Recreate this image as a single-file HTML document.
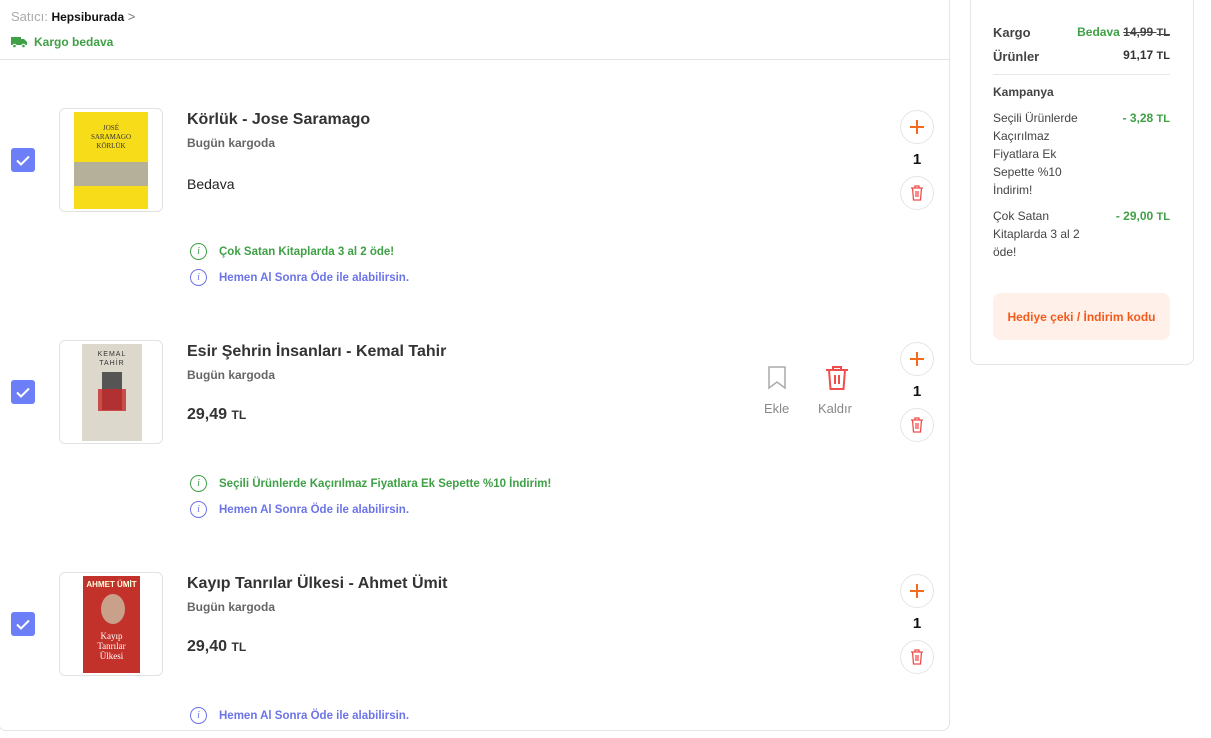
<!DOCTYPE html>
<html><head><meta charset="utf-8">
<style>
*{box-sizing:border-box;margin:0;padding:0}
body{width:1211px;height:738px;background:#fff;font-family:"Liberation Sans",Arial,sans-serif;position:relative;overflow:hidden;color:#333}
.a{position:absolute}
.main{left:-2px;top:-10px;width:952px;height:741px;border:1px solid #e5e5e5;border-radius:8px}
.side{left:970px;top:-10px;width:224px;height:375px;border:1px solid #e5e5e5;border-radius:8px}
.img{width:104px;height:104px;border:1px solid #e2e2e2;border-radius:6px;overflow:hidden}
.title{font-size:16px;font-weight:bold;color:#333}
.sub{font-size:12px;font-weight:bold;color:#666}
.price{font-size:16px;font-weight:bold;color:#333}
.circ{width:34px;height:34px;border:1px solid #e5e5e5;border-radius:50%;display:flex;align-items:center;justify-content:center}
.qty{font-size:15px;font-weight:bold;color:#111;width:34px;text-align:center}
.info{font-size:11.5px;font-weight:bold;display:flex;align-items:center;gap:12px}
.ic{width:17px;height:17px;border:1.3px solid;border-radius:50%;font-size:10px;font-weight:normal;display:flex;align-items:center;justify-content:center;font-style:italic;font-family:"Liberation Serif",serif}
.g{color:#3fa046}.b{color:#6b74e8}
.s{font-size:12px;color:#444}
</style></head><body>
<div class="a main"></div>
<div class="a" style="left:0;top:59px;width:949px;height:1px;background:#e5e5e5"></div>
<div class="a" style="left:11px;top:9px;font-size:13px;color:#aaa">Satıcı: <span style="color:#111;font-weight:bold;font-size:12px">Hepsiburada</span> <span style="color:#777">&gt;</span></div>
<div class="a g" style="left:11px;top:35px;font-size:12px;font-weight:bold;display:flex;align-items:center;gap:7px">
<svg width="16" height="12" viewBox="0 0 16 12"><rect x="0" y="1" width="10" height="8" fill="#3fa046"/><path d="M10 3h3l3 3v3h-6z" fill="#3fa046"/><circle cx="3.5" cy="10" r="1.8" fill="#3fa046" stroke="#fff"/><circle cx="12.5" cy="10" r="1.8" fill="#3fa046" stroke="#fff"/></svg>Kargo bedava</div>

<svg class="a" style="left:11px;top:148px" width="24" height="24"><rect width="24" height="24" rx="3" fill="#6c7ff7"/><path d="M6 12.5l4 4 8-8" stroke="#fff" stroke-width="2" fill="none"/></svg>
<svg class="a" style="left:11px;top:380px" width="24" height="24"><rect width="24" height="24" rx="3" fill="#6c7ff7"/><path d="M6 12.5l4 4 8-8" stroke="#fff" stroke-width="2" fill="none"/></svg>
<svg class="a" style="left:11px;top:612px" width="24" height="24"><rect width="24" height="24" rx="3" fill="#6c7ff7"/><path d="M6 12.5l4 4 8-8" stroke="#fff" stroke-width="2" fill="none"/></svg>

<div class="a img" style="left:59px;top:108px"><div style="position:absolute;left:14px;top:3px;width:74px;height:97px;background:#f7dc1a">
<div style="font-family:'Liberation Serif',serif;font-size:7px;color:#333;text-align:center;margin-top:12px;line-height:9px">JOSÉ<br>SARAMAGO<br>KÖRLÜK</div>
<div style="position:absolute;left:0;top:50px;width:74px;height:24px;background:#b5b09a"></div></div></div>
<div class="a img" style="left:59px;top:340px"><div style="position:absolute;left:22px;top:3px;width:60px;height:97px;background:#ddd8cc">
<div style="font-size:7px;color:#333;text-align:center;margin-top:6px;letter-spacing:1px;line-height:9px">KEMAL<br>TAHİR</div>
<div style="position:absolute;left:20px;top:28px;width:20px;height:38px;background:#555"></div><div style="position:absolute;left:16px;top:45px;width:28px;height:22px;background:#c8282a;opacity:.8"></div></div></div>
<div class="a img" style="left:59px;top:572px"><div style="position:absolute;left:23px;top:3px;width:57px;height:97px;background:#c3322a">
<div style="font-size:8px;color:#ffd;text-align:center;margin-top:4px;font-weight:bold">AHMET ÜMİT</div>
<div style="position:absolute;left:18px;top:18px;width:24px;height:30px;background:#c9a08a;border-radius:50%"></div>
<div style="font-family:'Liberation Serif',serif;font-size:9px;color:#fff;text-align:center;margin-top:42px;line-height:10px">Kayıp<br>Tanrılar<br>Ülkesi</div></div></div>

<div class="a title" style="left:187px;top:111px">Körlük - Jose Saramago</div>
<div class="a sub" style="left:187px;top:136px">Bugün kargoda</div>
<div class="a" style="left:187px;top:176px;font-size:14px;color:#222">Bedava</div>

<div class="a title" style="left:187px;top:343px">Esir Şehrin İnsanları - Kemal Tahir</div>
<div class="a sub" style="left:187px;top:368px">Bugün kargoda</div>
<div class="a price" style="left:187px;top:406px">29,49 <span style="font-size:12px">TL</span></div>

<div class="a title" style="left:187px;top:575px">Kayıp Tanrılar Ülkesi - Ahmet Ümit</div>
<div class="a sub" style="left:187px;top:600px">Bugün kargoda</div>
<div class="a price" style="left:187px;top:638px">29,40 <span style="font-size:12px">TL</span></div>

<div class="a info g" style="left:190px;top:243px"><span class="ic">i</span>Çok Satan Kitaplarda 3 al 2 öde!</div>
<div class="a info b" style="left:190px;top:269px"><span class="ic">i</span>Hemen Al Sonra Öde ile alabilirsin.</div>
<div class="a info g" style="left:190px;top:475px"><span class="ic">i</span>Seçili Ürünlerde Kaçırılmaz Fiyatlara Ek Sepette %10 İndirim!</div>
<div class="a info b" style="left:190px;top:501px"><span class="ic">i</span>Hemen Al Sonra Öde ile alabilirsin.</div>
<div class="a info b" style="left:190px;top:707px"><span class="ic">i</span>Hemen Al Sonra Öde ile alabilirsin.</div>

<svg class="a" style="left:767px;top:366px" width="20" height="24" viewBox="0 0 20 24"><path d="M2 1h16v21l-8-6-8 6z" fill="none" stroke="#aaa" stroke-width="1.5"/></svg>
<div class="a" style="left:764px;top:401px;font-size:13px;color:#888">Ekle</div>
<svg class="a" style="left:825px;top:365px" width="24" height="26" viewBox="0 0 24 26"><path d="M1 5h22M8 5V2h8v3M4 5l1.5 19h13L20 5M10 10v9M14 10v9" fill="none" stroke="#f04d4d" stroke-width="2"/></svg>
<div class="a" style="left:818px;top:401px;font-size:13px;color:#888">Kaldır</div>

<script>
[110,342,574].forEach(function(y){
document.body.insertAdjacentHTML('beforeend',
'<div class="a circ" style="left:900px;top:'+y+'px"><svg width="16" height="16"><path d="M8 1v14M1 8h14" stroke="#f26a1b" stroke-width="2"/></svg></div>'+
'<div class="a qty" style="left:900px;top:'+(y+41)+'px">1</div>'+
'<div class="a circ" style="left:900px;top:'+(y+66)+'px"><svg width="14" height="16" viewBox="0 0 14 16"><path d="M1 3h12M5 3V1h4v2M2.5 3l1 12h7l1-12M6 6v6M8 6v6" fill="none" stroke="#f04d4d" stroke-width="1.3"/></svg></div>');
});
</script>

<div class="a side"></div>
<div class="a" style="left:993px;top:25px;font-size:13px;font-weight:bold;color:#444">Kargo</div>
<div class="a" style="left:1040px;top:25px;width:130px;text-align:right;font-size:12px;font-weight:bold;white-space:nowrap"><span class="g">Bedava</span> <span style="color:#444;text-decoration:line-through">14,99 <span style="font-size:11px">TL</span></span></div>
<div class="a" style="left:993px;top:49px;font-size:13px;font-weight:bold;color:#444">Ürünler</div>
<div class="a" style="left:1100px;top:48px;width:70px;text-align:right;font-size:12px;font-weight:bold;color:#333">91,17 <span style="font-size:11px">TL</span></div>
<div class="a" style="left:993px;top:74px;width:177px;height:1px;background:#e8e8e8"></div>
<div class="a" style="left:993px;top:85px;font-size:12px;font-weight:bold;color:#444">Kampanya</div>
<div class="a s" style="left:993px;top:109px;width:100px;line-height:18px">Seçili Ürünlerde Kaçırılmaz Fiyatlara Ek Sepette %10 İndirim!</div>
<div class="a g" style="left:1100px;top:111px;width:70px;text-align:right;font-size:12px;font-weight:bold">- 3,28 <span style="font-size:11px">TL</span></div>
<div class="a s" style="left:993px;top:207px;width:100px;line-height:18px">Çok Satan Kitaplarda 3 al 2 öde!</div>
<div class="a g" style="left:1090px;top:209px;width:80px;text-align:right;font-size:12px;font-weight:bold">- 29,00 <span style="font-size:11px">TL</span></div>
<div class="a" style="left:993px;top:293px;width:177px;height:47px;background:#fff0e9;border-radius:8px;display:flex;align-items:center;justify-content:center;font-size:12px;font-weight:bold;color:#f35b1c">Hediye çeki / İndirim kodu</div>
</body></html>
